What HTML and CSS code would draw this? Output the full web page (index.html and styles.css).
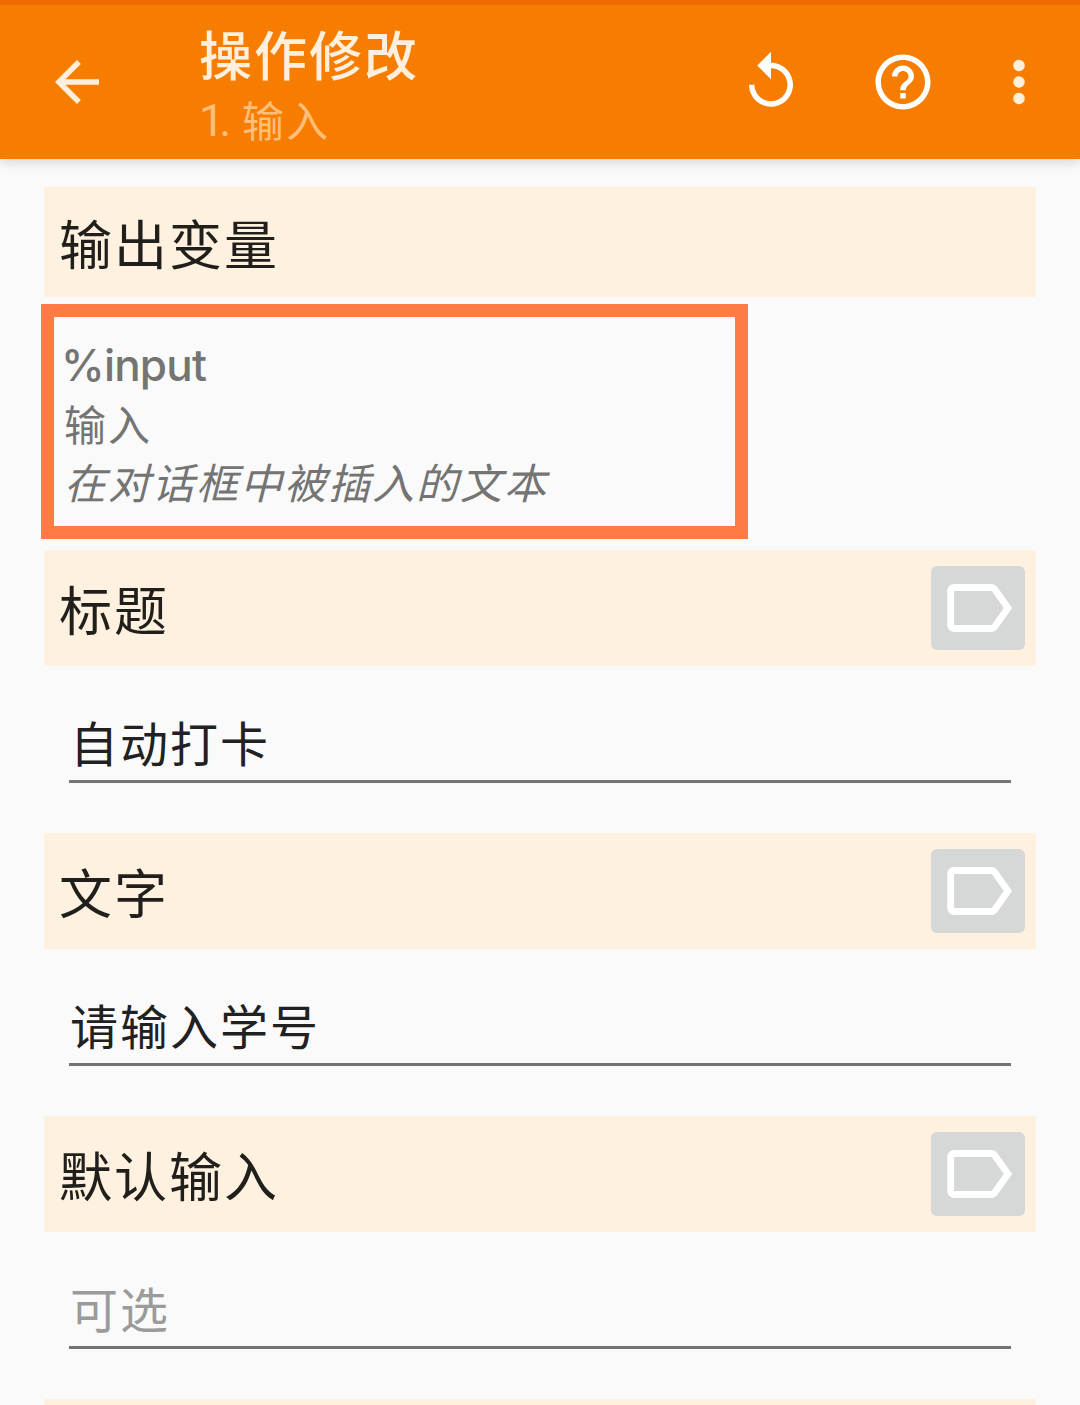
FILE: index.html
```html
<!DOCTYPE html>
<html lang="zh-CN">
<head>
<meta charset="utf-8">
<title>操作修改</title>
<link rel="stylesheet" href="styles.css">
</head>
<body>
<header class="app-bar">
  <svg class="icon icon-back" viewBox="0 0 24 24"><path d="M20 11H7.83l5.59-5.59L12 4l-8 8 8 8 1.41-1.41L7.83 13H20v-2z"/></svg>
  <div class="titles">
    <h1 class="title">操作修改</h1>
    <div class="subtitle"><span class="subtitle-index">1.</span>输入</div>
  </div>
  <div class="actions">
    <svg class="icon" viewBox="0 0 24 24"><path d="M12 5V1L7 6l5 5V7c3.31 0 6 2.69 6 6s-2.69 6-6 6-6-2.69-6-6H4c0 4.42 3.58 8 8 8s8-3.58 8-8-3.58-8-8-8z"/></svg>
    <svg class="icon" viewBox="0 0 24 24"><path d="M11 18h2v-2h-2v2zm1-16C6.48 2 2 6.48 2 12s4.48 10 10 10 10-4.48 10-10S17.52 2 12 2zm0 18c-4.41 0-8-3.59-8-8s3.59-8 8-8 8 3.59 8 8-3.59 8-8 8zm0-14c-2.21 0-4 1.79-4 4h2c0-1.1.9-2 2-2s2 .9 2 2c0 2-3 1.75-3 5h2c0-2.25 3-2.5 3-5 0-2.21-1.79-4-4-4z"/></svg>
    <svg class="icon icon-more" viewBox="0 0 24 24"><circle cx="12" cy="6" r="2.1"/><circle cx="12" cy="12" r="2.1"/><circle cx="12" cy="18" r="2.1"/></svg>
  </div>
</header>
<main class="content">
  <section class="heading heading-output"><h2 class="heading-text">输出变量</h2></section>
  <section class="variable">
    <div class="variable-name">%input</div>
    <div class="variable-label">输入</div>
    <div class="variable-description">在对话框中被插入的文本</div>
  </section>
  <section class="heading">
    <h2 class="heading-text">标题</h2>
    <div class="tag-button"><svg class="tag-icon" viewBox="0 0 24 24"><path d="M17.63 5.84C17.27 5.33 16.67 5 16 5L5 5.01C3.9 5.01 3 5.9 3 7v10c0 1.1.9 1.99 2 1.99L16 19c.67 0 1.27-.33 1.63-.84L22 12l-4.37-6.16zM16 17H5V7h11l3.55 5L16 17z"/></svg></div>
  </section>
  <div class="field">自动打卡</div>
  <section class="heading">
    <h2 class="heading-text">文字</h2>
    <div class="tag-button"><svg class="tag-icon" viewBox="0 0 24 24"><path d="M17.63 5.84C17.27 5.33 16.67 5 16 5L5 5.01C3.9 5.01 3 5.9 3 7v10c0 1.1.9 1.99 2 1.99L16 19c.67 0 1.27-.33 1.63-.84L22 12l-4.37-6.16zM16 17H5V7h11l3.55 5L16 17z"/></svg></div>
  </section>
  <div class="field">请输入学号</div>
  <section class="heading">
    <h2 class="heading-text">默认输入</h2>
    <div class="tag-button"><svg class="tag-icon" viewBox="0 0 24 24"><path d="M17.63 5.84C17.27 5.33 16.67 5 16 5L5 5.01C3.9 5.01 3 5.9 3 7v10c0 1.1.9 1.99 2 1.99L16 19c.67 0 1.27-.33 1.63-.84L22 12l-4.37-6.16zM16 17H5V7h11l3.55 5L16 17z"/></svg></div>
  </section>
  <div class="field field-empty">可选</div>
  <section class="heading heading-next"></section>
</main>
</body>
</html>
```

FILE: styles.css
```css
* {
  box-sizing: border-box;
}

body {
  margin: 0;
  height: 1405px;
  overflow: hidden;
  background: #fafafa;
  color: #211f1b;
  font-family: "Noto Sans CJK SC", sans-serif;
}

h1,
h2 {
  margin: 0;
  font-weight: 400;
}

.app-bar {
  display: flex;
  align-items: flex-start;
  height: 159px;
  padding: 0 28px 0 44px;
  border-top: 5px solid #ef6c00;
  background: #f77d00;
  box-shadow: 0 2px 12px rgba(0, 0, 0, 0.18);
}

.icon {
  flex: none;
  width: 66px;
  height: 66px;
  margin-top: 44px;
  fill: #fff;
}

.icon-back,
.icon-more {
  fill: #ffefdc;
}

.titles {
  margin-left: 89px;
  padding-top: 17px;
}

.title {
  font-size: 53px;
  font-weight: 500;
  line-height: 62px;
  letter-spacing: 2px;
  color: #ffefdc;
}

.subtitle {
  display: flex;
  margin-top: 4px;
  font-size: 42px;
  line-height: 62px;
  letter-spacing: 2px;
  color: #ffbe7a;
}

.subtitle-index {
  width: 43px;
  padding-top: 2px;
  font-family: Roboto, sans-serif;
  font-size: 45px;
  letter-spacing: -5px;
}

.actions {
  display: flex;
  gap: 66px;
  margin-left: auto;
}

.icon-more {
  margin-left: -16px;
}

.content {
  padding: 28px 44px 0;
}

.heading {
  display: flex;
  align-items: center;
  justify-content: space-between;
  height: 116px;
  padding: 0 11px 0 15px;
  background: #fff1df;
}

.heading-output {
  height: 110px;
}

.heading-next {
  height: 6px;
}

.heading-text {
  font-size: 53px;
  line-height: 80px;
  letter-spacing: 2px;
}

.tag-button {
  display: flex;
  align-items: center;
  justify-content: center;
  width: 94px;
  height: 84px;
  border-radius: 6px;
  background: #d6d8d7;
}

.tag-icon {
  width: 82px;
  height: 82px;
  fill: #fff;
}

.variable {
  width: 707px;
  height: 235px;
  margin: 7px 0 11px -3px;
  padding: 19px 0 0 10px;
  border: 13px solid #ff7b46;
  font-size: 42px;
  line-height: 58px;
  letter-spacing: 2px;
  color: #747474;
}

.variable-name {
  margin-left: -3px;
  font-family: Inter, sans-serif;
  font-size: 44px;
  font-weight: 500;
  letter-spacing: -0.8px;
}

.variable-description {
  font-style: italic;
}

.field {
  height: 117px;
  margin: 0 25px 50px;
  padding: 39px 0 0 1px;
  border-bottom: 3px solid #747474;
  font-size: 48px;
  line-height: 72px;
  letter-spacing: 2px;
  color: #212121;
}

.field-empty {
  color: #9b9b9b;
}
```
